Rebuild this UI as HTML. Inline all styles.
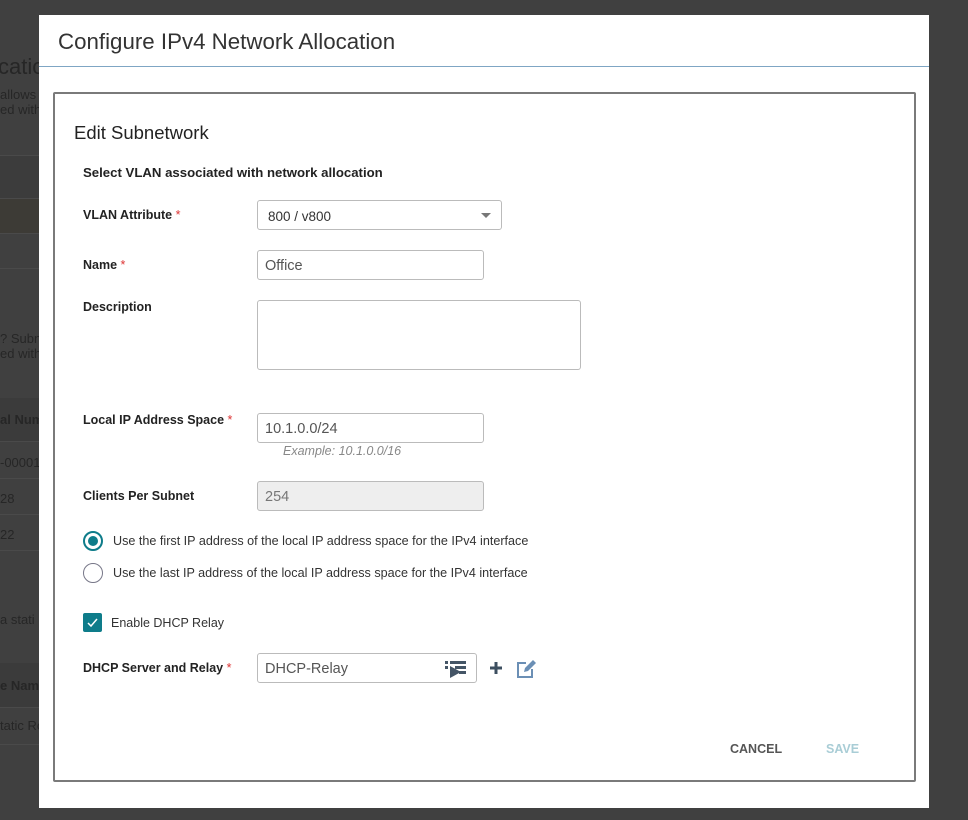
<!DOCTYPE html>
<html><head><style>
*{box-sizing:border-box;margin:0;padding:0}
body{width:968px;height:820px;background:#404040;font-family:"Liberation Sans",sans-serif;position:relative;overflow:hidden;color:#222}
.a{position:absolute}
.bg{color:#262626;font-size:13px}
.line{position:absolute;left:0;width:39px;height:1px;background:#4a4a4a}
.m{left:39px;top:15px;width:890px;height:793px;background:#fff}
.lbl{position:absolute;left:83px;font-size:12.5px;font-weight:bold;color:#222;white-space:nowrap}
.req{color:#d33;font-weight:normal}
.in{position:absolute;border:1px solid #bbb;border-radius:3px;background:#fff;font-size:14.5px;color:#555;padding-left:7px;padding-top:2px;display:flex;align-items:center}
.rt{position:absolute;left:113px;font-size:12.6px;color:#333;white-space:nowrap}
</style></head><body>
<div class="a bg" style="left:-2px;top:54px;font-size:22px">catio</div>
<div class="a bg" style="left:0;top:87px">allows</div>
<div class="a bg" style="left:0;top:102px">ed with</div>
<div class="a" style="left:0;top:155px;width:39px;height:43px;background:#3c3c3c"></div>
<div class="a" style="left:0;top:198px;width:39px;height:35px;background:#3d3b36"></div>
<div class="line" style="top:155px"></div><div class="line" style="top:198px"></div><div class="line" style="top:233px"></div><div class="line" style="top:268px"></div>
<div class="a bg" style="left:0;top:331px">? Subne</div>
<div class="a bg" style="left:0;top:346px">ed with</div>
<div class="a" style="left:0;top:398px;width:39px;height:43px;background:#3b3b3b"></div>
<div class="a bg" style="left:0;top:412px;font-weight:bold">al Num</div>
<div class="line" style="top:441px"></div>
<div class="a bg" style="left:0;top:455px">-00001</div>
<div class="line" style="top:478px"></div>
<div class="a bg" style="left:0;top:491px">28</div>
<div class="line" style="top:514px"></div>
<div class="a bg" style="left:0;top:527px">22</div>
<div class="line" style="top:550px"></div>
<div class="a bg" style="left:0;top:612px">a stati</div>
<div class="a" style="left:0;top:663px;width:39px;height:44px;background:#3b3b3b"></div>
<div class="a bg" style="left:0;top:678px;font-weight:bold">e Nam</div>
<div class="line" style="top:707px"></div>
<div class="a bg" style="left:0;top:718px">tatic Ro</div>
<div class="line" style="top:744px"></div>

<div class="a m">
<div class="a" style="left:19px;top:14px;font-size:22.3px;color:#333">Configure IPv4 Network Allocation</div>
<div class="a" style="left:0;top:51px;width:890px;height:1px;background:#7fa6c4"></div>
</div>
<div class="a" style="left:53px;top:92px;width:863px;height:690px;border:2px solid #7a7a7a;border-radius:2px"></div>
<div class="a" style="left:74px;top:122px;font-size:18.5px;color:#222">Edit Subnetwork</div>
<div class="lbl" style="top:165px;font-size:13.2px">Select VLAN associated with network allocation</div>
<div class="lbl" style="top:208px">VLAN Attribute <span class="req">*</span></div>
<div class="in" style="left:257px;top:200px;width:245px;height:30px;font-size:13.5px;color:#333;padding-left:10px">800 / v800<span style="position:absolute;right:10px;top:12px;border:5px solid transparent;border-top:5px solid #777;border-bottom:0"></span></div>
<div class="lbl" style="top:258px">Name <span class="req">*</span></div>
<div class="in" style="left:257px;top:250px;width:227px;height:30px">Office</div>
<div class="lbl" style="top:300px">Description</div>
<div class="in" style="left:257px;top:300px;width:324px;height:70px"></div>
<div class="lbl" style="top:413px">Local IP Address Space <span class="req">*</span></div>
<div class="in" style="left:257px;top:413px;width:227px;height:30px">10.1.0.0/24</div>
<div class="a" style="left:283px;top:444px;font-size:12.5px;color:#888;font-style:italic">Example: 10.1.0.0/16</div>
<div class="lbl" style="top:489px">Clients Per Subnet</div>
<div class="in" style="left:257px;top:481px;width:227px;height:30px;background:#eee;color:#777">254</div>
<div class="a" style="left:83px;top:531px;width:20px;height:20px;border:2px solid #0e7c8a;border-radius:50%"><div style="margin:3px;width:10px;height:10px;border-radius:50%;background:#0e7c8a"></div></div>
<div class="rt" style="top:534px">Use the first IP address of the local IP address space for the IPv4 interface</div>
<div class="a" style="left:83px;top:563px;width:20px;height:20px;border:1px solid #778;border-radius:50%"></div>
<div class="rt" style="top:566px">Use the last IP address of the local IP address space for the IPv4 interface</div>
<div class="a" style="left:83px;top:613px;width:19px;height:19px;background:#0e7c8a;border-radius:2px"><svg width="19" height="19"><path d="M5 10l3 3 6-7" stroke="#fff" stroke-width="1.5" fill="none"/></svg></div>
<div class="a" style="left:111px;top:616px;font-size:12.5px;color:#333">Enable DHCP Relay</div>
<div class="lbl" style="top:661px">DHCP Server and Relay <span class="req">*</span></div>
<div class="in" style="left:257px;top:653px;width:220px;height:30px">DHCP-Relay
<svg class="a" style="left:186px;top:5px" width="24" height="20"><rect x="1" y="2" width="3" height="3" fill="#456"/><rect x="6" y="2" width="16" height="3" fill="#456"/><rect x="1" y="7" width="3" height="3" fill="#456"/><rect x="11" y="7" width="11" height="3" fill="#456"/><path d="M6 7v12l11-6z" fill="#456"/><rect x="15" y="12" width="7" height="3" fill="#456"/></svg></div>
<svg class="a" style="left:488px;top:660px" width="16" height="16"><path d="M8 2v12M2 8h12" stroke="#3d4f60" stroke-width="3"/></svg>
<svg class="a" style="left:516px;top:659px" width="22" height="20"><path d="M10 4H2v14h14v-8" stroke="#6b8fb5" stroke-width="2" fill="none"/><path d="M8 13l1-4 8-8 3 3-8 8z" fill="#6b8fb5"/></svg>
<div class="a" style="left:730px;top:742px;font-size:12.5px;font-weight:bold;color:#555">CANCEL</div>
<div class="a" style="left:826px;top:742px;font-size:12.5px;font-weight:bold;color:#a9cdd6">SAVE</div>
</body></html>
